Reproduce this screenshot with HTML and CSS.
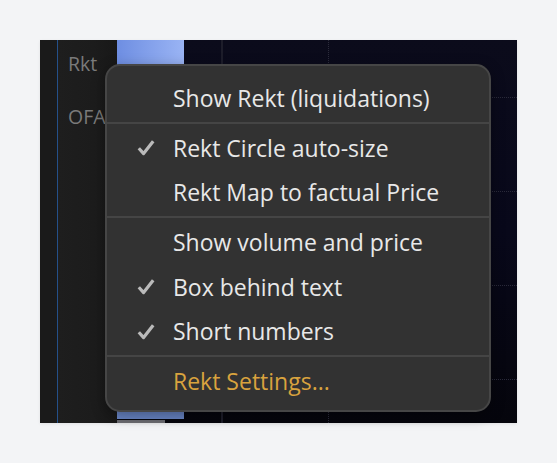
FILE: index.html
```html
<!DOCTYPE html>
<html lang="en">
<head>
<meta charset="utf-8">
<title>Rekt menu</title>
<link rel="stylesheet" href="styles.css">
</head>
<body>
<div class="stage">
  <div class="panel">
    <div class="axis">
      <div class="axis-inner">
        <span class="axis-label label-rkt">Rkt</span>
        <span class="axis-label label-ofa">OFA</span>
      </div>
    </div>
    <div class="chart">
      <div class="bar-col">
        <div class="bar"></div>
        <div class="bar-base"></div>
      </div>
      <div class="plot"></div>
      <span class="vline solid"></span>
      <span class="vline dotted"></span>
      <span class="hline h1"></span>
      <span class="hline h2"></span>
      <span class="hline h3"></span>
      <span class="hline h4"></span>
    </div>

    <div class="menu">
      <div class="item"><span class="check"></span><span class="label">Show Rekt (liquidations)</span></div>
      <div class="sep"></div>
      <div class="item"><span class="check"><svg viewBox="0 0 18 17" width="18" height="17"><path d="M1.8 9.2 L6.6 14.6 L16.2 2.2" fill="none" stroke="#bababa" stroke-width="3.2" stroke-linejoin="round"/></svg></span><span class="label">Rekt Circle auto-size</span></div>
      <div class="item"><span class="check"></span><span class="label">Rekt Map to factual Price</span></div>
      <div class="sep"></div>
      <div class="item"><span class="check"></span><span class="label">Show volume and price</span></div>
      <div class="item"><span class="check"><svg viewBox="0 0 18 17" width="18" height="17"><path d="M1.8 9.2 L6.6 14.6 L16.2 2.2" fill="none" stroke="#bababa" stroke-width="3.2" stroke-linejoin="round"/></svg></span><span class="label">Box behind text</span></div>
      <div class="item"><span class="check"><svg viewBox="0 0 18 17" width="18" height="17"><path d="M1.8 9.2 L6.6 14.6 L16.2 2.2" fill="none" stroke="#bababa" stroke-width="3.2" stroke-linejoin="round"/></svg></span><span class="label">Short numbers</span></div>
      <div class="sep"></div>
      <div class="item settings"><span class="check"></span><span class="label">Rekt Settings...</span></div>
    </div>
  </div>
</div>
</body>
</html>
```

FILE: styles.css
```css
* { box-sizing: border-box; }

html, body {
  margin: 0;
  padding: 0;
  background: #f3f4f6;
}

body {
  font-family: "Open Sans", "Noto Sans", sans-serif;
}

.stage {
  padding: 40px;
}

.panel {
  position: relative;
  width: 477px;
  height: 383px;
  display: grid;
  grid-template-columns: 77px 1fr;
  box-shadow: 0 1px 3px rgba(0, 0, 0, 0.08);
}

/* left axis column */
.axis {
  background: #1a1a1a;
  padding-left: 17px;
}

.axis-inner {
  height: 100%;
  border-left: 1px solid #24508a;
  background: linear-gradient(to right, #1e1e1e 0%, #1c1c1c 60%, #181818 100%);
  display: flex;
  flex-direction: column;
  padding: 10px 0 0 10px;
}

.axis-label {
  color: #7a7a7a;
  font-size: 19.5px;
  line-height: 27px;
}

.label-ofa {
  margin-top: 26px;
}

/* chart area */
.chart {
  position: relative;
  display: flex;
  background: linear-gradient(to bottom, #0b0b1b 0%, #08081a 50%, #05050c 100%);
  overflow: hidden;
}

.bar-col {
  width: 67px;
  display: flex;
  flex-direction: column;
}

.bar {
  flex: 1;
  background:
    linear-gradient(to bottom, rgba(106, 135, 200, 0) 40%, #6a87c8 92%),
    linear-gradient(to right, #6e8ee2 0%, #9ab4f4 100%);
}

.bar-base {
  height: 3px;
  margin-top: 1px;
  width: 48px;
  background: #6c6c72;
}

.plot {
  flex: 1;
}

.vline {
  position: absolute;
  top: 0;
  bottom: 0;
}

.vline.solid {
  left: 104px;
  width: 2px;
  background: #1d1d2a;
}

.vline.dotted {
  left: 211px;
  width: 0;
  border-left: 1px dotted #2c2c3c;
}

.hline {
  position: absolute;
  left: 67px;
  right: 0;
  height: 0;
  border-top: 1px dotted #2a2a3a;
}

.h1 { top: 57px; }
.h2 { top: 151px; }
.h3 { top: 245px; }
.h4 { top: 339px; }

/* context menu */
.menu {
  position: absolute;
  left: 65px;
  top: 24px;
  width: 386px;
  height: 348px;
  background: #323232;
  border: 2px solid #464646;
  border-radius: 15px;
  padding: 9.5px 0 8px;
  box-shadow: 0 4px 14px rgba(0, 0, 0, 0.35);
}

.item {
  display: flex;
  align-items: center;
  height: 44.5px;
  padding-left: 30px;
  color: #e8e8e8;
  font-size: 23px;
  white-space: nowrap;
}

.check {
  width: 18px;
  height: 17px;
  margin-right: 18px;
  display: flex;
}

.settings {
  color: #d9a33e;
}

.sep {
  height: 2px;
  background: #454545;
  margin: 1.5px 0 2px;
}
```
